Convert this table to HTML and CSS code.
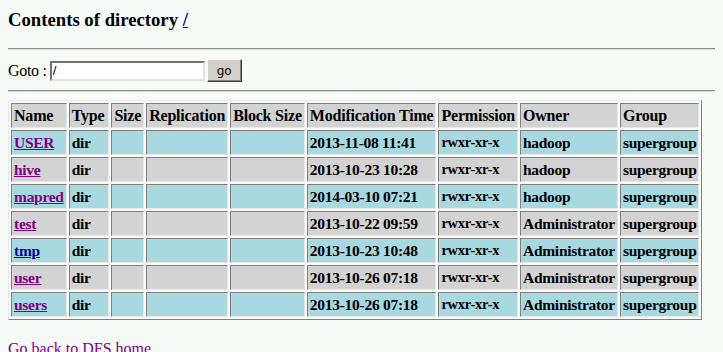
FILE: index.html
```html
<!DOCTYPE html>
<html lang="en">
<head>
    <meta charset="UTF-8">
    <title>HDFS:/</title>
    <link rel="stylesheet" href="styles.css">
</head>
<body>

    <h3>Contents of directory <a href="#" class="novo">/</a></h3>
    <hr>

    <form class="goto" action="#" method="get">
        Goto : <input name="dir" type="text" id="dir" value="/"><input name="go" type="submit" value="go">
    </form>
    <hr>

    <table class="listagem" title="Directory Listing">
        <tr class="cabecalho">
            <td>Name</td><td class="tipo">Type</td><td>Size</td><td>Replication</td><td>Block Size</td><td>Modification Time</td><td>Permission</td><td>Owner</td><td>Group</td>
        </tr>
        <tr class="azul">
            <td><a href="#">USER</a></td><td>dir</td><td></td><td></td><td></td><td>2013-11-08 11:41</td><td class="perm">rwxr-xr-x</td><td>hadoop</td><td>supergroup</td>
        </tr>
        <tr class="cinza">
            <td><a href="#">hive</a></td><td>dir</td><td></td><td></td><td></td><td>2013-10-23 10:28</td><td class="perm">rwxr-xr-x</td><td>hadoop</td><td>supergroup</td>
        </tr>
        <tr class="azul">
            <td><a href="#">mapred</a></td><td>dir</td><td></td><td></td><td></td><td>2014-03-10 07:21</td><td class="perm">rwxr-xr-x</td><td>hadoop</td><td>supergroup</td>
        </tr>
        <tr class="cinza">
            <td><a href="#">test</a></td><td>dir</td><td></td><td></td><td></td><td>2013-10-22 09:59</td><td class="perm">rwxr-xr-x</td><td>Administrator</td><td>supergroup</td>
        </tr>
        <tr class="azul">
            <td><a href="#" class="novo">tmp</a></td><td>dir</td><td></td><td></td><td></td><td>2013-10-23 10:48</td><td class="perm">rwxr-xr-x</td><td>Administrator</td><td>supergroup</td>
        </tr>
        <tr class="cinza">
            <td><a href="#">user</a></td><td>dir</td><td></td><td></td><td></td><td>2013-10-26 07:18</td><td class="perm">rwxr-xr-x</td><td>Administrator</td><td>supergroup</td>
        </tr>
        <tr class="azul">
            <td><a href="#">users</a></td><td>dir</td><td></td><td></td><td></td><td>2013-10-26 07:18</td><td class="perm">rwxr-xr-x</td><td>Administrator</td><td>supergroup</td>
        </tr>
    </table>

    <p class="voltar"><a href="#">Go back to DFS home</a></p>

</body>
</html>
```

FILE: styles.css
```css
body {
    margin: 8px;
    background: #f7fbf8;
    font-family: "Liberation Serif", "Times New Roman", serif;
    font-size: 16px;
    color: #000;
}

a {
    color: #800080;
}

a.novo {
    color: #00009c;
}

h3 {
    font-size: 18.72px;
    margin: 1px 0 18px;
    line-height: 21px;
}

hr {
    height: 0;
    margin: 0 -8px 0 0;
    border: none;
    border-top: 1px solid #8c8c8c;
    border-bottom: 1px solid #d8d8d8;
}

/* Linha do Goto */
.goto {
    margin: 9px 0 8px;
    line-height: 22px;
    display: flex;
    align-items: center;
    letter-spacing: -0.3px;
}

.goto input[type="text"] {
    width: 150px;
    height: 16px;
    margin: 0 2px 0 3px;
    padding: 0 0 0 1px;
    border: 2px solid;
    border-color: #707070 #e4e4e4 #e4e4e4 #707070;
    background: #fff;
    font-family: "Liberation Sans", Arial, sans-serif;
    font-size: 13px;
}

.goto input[type="submit"] {
    width: 35px;
    height: 23px;
    padding: 0;
    border: 1px solid;
    border-color: #fff #404040 #404040 #fff;
    box-shadow: inset -1px -1px 0 #808080;
    background: #d4d0c8;
    font-family: "DejaVu Sans", Tahoma, sans-serif;
    font-size: 12px;
    color: #000;
    letter-spacing: 0;
}

/* Tabela de arquivos */
.listagem {
    border: 1px solid;
    border-color: #e8e8e8 #808080 #808080 #e8e8e8;
    border-spacing: 2px;
    margin-top: 8px;
}

.listagem td {
    border: 1px solid;
    border-color: #808080 #e8e8e8 #e8e8e8 #808080;
    padding: 2px;
    line-height: 19px;
    font-size: 15.5px;
    letter-spacing: -0.28px;
    font-weight: bold;
    white-space: nowrap;
}

/* cabeçalho em tamanho normal */
.listagem .cabecalho td {
    font-size: 16px;
    letter-spacing: -0.2px;
}

.listagem .cabecalho td.tipo {
    padding-right: 4px;
}

.listagem td.perm {
    font-size: 14.5px;
    letter-spacing: -0.25px;
}

.cabecalho td,
.cinza td {
    background: #d3d3d3;
}

.azul td {
    background: #a8d8e0;
}

.voltar {
    margin: 20px 0 0;
}

.voltar a {
    text-decoration: none;
}
```
